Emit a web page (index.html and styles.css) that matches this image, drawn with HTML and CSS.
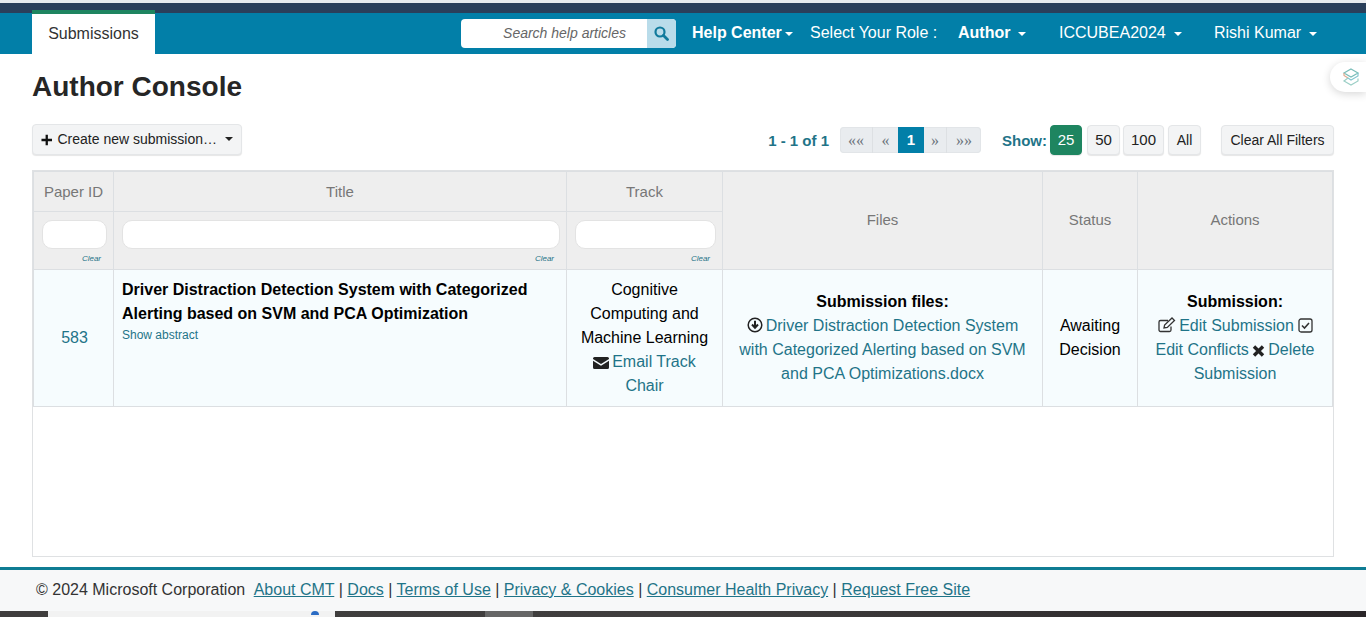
FILE: index.html
```html
<!DOCTYPE html>
<html>
  <head>
    <title>Author Console</title>
    <link rel="stylesheet" href="styles.css">
  </head>
  <body>
    <div class="topline"></div>
    <nav class="nav">
      <a class="tab" href="#">Submissions</a>
      <div class="nav-right">
        <form class="search">
          <span class="search-text">Search help articles</span>
          <span class="search-btn">
            <svg width="15" height="15" viewBox="0 0 15 15"><circle cx="6" cy="6" r="4.500" fill="none" stroke="#0f7a9c" stroke-width="2.200"/><path d="M9.500 9.500l4 4" stroke="#0f7a9c" stroke-width="2.800" stroke-linecap="round"/></svg>
          </span>
        </form>
        <span class="nav-item help"><b>Help Center</b><i class="caret small"></i></span>
        <span class="nav-item role">Select Your Role :</span>
        <span class="nav-item author"><b>Author</b><i class="caret"></i></span>
        <span class="nav-item conf">ICCUBEA2024<i class="caret"></i></span>
        <span class="nav-item user">Rishi Kumar<i class="caret"></i></span>
      </div>
    </nav>

    <div class="widget">
      <svg width="20" height="20" viewBox="0 0 20 20" fill="none" stroke-width="1.200"><path d="M10 2l7 4-7 4-7-4z" stroke="#79bdb8"/><path d="M3 6v2.500l4 2.500" stroke="#e0a98f"/><path d="M17 6v3l-7 4-3-2" stroke="#84c6cf"/><path d="M7 11l-4 3 7 4 7-4v-2.500" stroke="#9ccfc6"/></svg>
    </div>

    <main class="main">
      <h1 class="title">Author Console</h1>
      <div class="toolbar">
        <button class="btn create" type="button">
          <svg width="12" height="12" viewBox="0 0 12 12"><path d="M6 0.500v11M0.500 6h11" stroke="#111" stroke-width="2.400"/></svg>
          <span>Create new submission…</span>
          <i class="caret dark"></i>
        </button>
        <div class="tools-right">
          <span class="count">1 - 1 of 1</span>
          <ul class="pager">
            <li class="p-first">««</li>
            <li class="p-prev">«</li>
            <li class="active">1</li>
            <li class="p-next">»</li>
            <li class="p-last">»»</li>
          </ul>
          <span class="show">Show:</span>
          <button class="btn size on" type="button">25</button>
          <button class="btn size s50" type="button">50</button>
          <button class="btn size s100" type="button">100</button>
          <button class="btn size sall" type="button">All</button>
          <button class="btn clear" type="button">Clear All Filters</button>
        </div>
      </div>

      <div class="grid-box">
        <table class="grid">
          <colgroup>
            <col class="c-id"><col class="c-title"><col class="c-track"><col class="c-files"><col class="c-status"><col class="c-actions">
          </colgroup>
          <thead>
            <tr class="head-row">
              <th>Paper ID</th>
              <th>Title</th>
              <th>Track</th>
              <th class="merged" rowspan="2">Files</th>
              <th class="merged" rowspan="2">Status</th>
              <th class="merged" rowspan="2">Actions</th>
            </tr>
            <tr class="filter-row">
              <th><input class="filter" type="text"><a class="clear-link" href="#">Clear</a></th>
              <th><input class="filter" type="text"><a class="clear-link" href="#">Clear</a></th>
              <th><input class="filter" type="text"><a class="clear-link" href="#">Clear</a></th>
            </tr>
          </thead>
          <tbody>
            <tr>
              <td class="center id-cell"><a href="#">583</a></td>
              <td class="title-cell">
                <b>Driver Distraction Detection System with Categorized Alerting based on SVM and PCA Optimization</b>
                <a class="abstract" href="#">Show abstract</a>
              </td>
              <td class="center">
                Cognitive Computing and Machine Learning
                <svg class="ico" width="16" height="12" viewBox="0 0 16 12"><path d="M1.500 0h13A1.500 1.500 0 0 1 16 1.500v.6L8 7 0 2.100v-.6A1.500 1.500 0 0 1 1.500 0z" fill="#222"/><path d="M0 3.700l8 5 8-5v6.800a1.500 1.500 0 0 1-1.500 1.500h-13A1.500 1.500 0 0 1 0 10.500z" fill="#222"/></svg>
                <a href="#">Email Track Chair</a>
              </td>
              <td class="center">
                <b>Submission files:</b><br>
                <svg class="ico" width="16" height="16" viewBox="0 0 16 16" fill="none" stroke="#222"><circle cx="8" cy="8" r="6.800" stroke-width="1.500"/><path d="M8 3.800v6M5 7.500l3 3.200 3-3.200" stroke-width="2"/></svg>
                <a href="#">Driver Distraction Detection System with Categorized Alerting based on SVM and PCA Optimizations.docx</a>
              </td>
              <td class="center">Awaiting Decision</td>
              <td class="center">
                <b>Submission:</b><br>
                <svg class="ico" width="18" height="16" viewBox="0 0 18 16" fill="none" stroke="#333" stroke-width="1.300"><path d="M13 9.500v3.500a1.500 1.500 0 0 1-1.500 1.500h-9A1.500 1.500 0 0 1 1 13V5a1.500 1.500 0 0 1 1.500-1.500H10"/><path d="M6 11l.6-3L14 1l2.500 2.500-7.200 7z"/></svg>
                <a href="#">Edit Submission</a>
                <svg class="ico" width="15" height="15" viewBox="0 0 15 15" fill="none" stroke="#333"><rect x="1" y="1" width="13" height="13" rx="2" stroke-width="1.300"/><path d="M4 7.500l2.500 2.500L11 5" stroke-width="1.600"/></svg>
                <a href="#">Edit Conflicts</a>
                <svg class="ico ico-x" width="13" height="12" viewBox="0 0 13 12"><path d="M2 1.500l9 9M11 1.500l-9 9" stroke="#222" stroke-width="3.400"/></svg>
                <a href="#">Delete Submission</a>
              </td>
            </tr>
          </tbody>
        </table>
      </div>
    </main>

    <footer class="footer">
      © 2024 Microsoft Corporation
      <span class="foot-links">
        <a href="#">About CMT</a> | <a href="#">Docs</a> | <a href="#">Terms of Use</a> | <a href="#">Privacy &amp; Cookies</a> | <a href="#">Consumer Health Privacy</a> | <a href="#">Request Free Site</a>
      </span>
    </footer>

    <div class="taskbar">
      <div class="task-white"><i class="task-dot"></i></div>
      <div class="task-grey"></div>
    </div>
  </body>
</html>
```

FILE: styles.css
```css
* {
  box-sizing: border-box;
}
html, body {
  height: 617px;
  overflow: hidden;
}
body {
  margin: 0;
  background-color: #fff;
  color: #212529;
  font-family: "Liberation Sans", Arial, sans-serif;
  font-size: 16px;
}
a {
  color: #1f7488;
  text-decoration: none;
}

.topline {
  height: 13px;
  background-color: #2a3f5a;
  border-top: 3px solid #e8ebee;
}
.nav {
  height: 41px;
  background-color: #027fa8;
  display: flex;
  justify-content: space-between;
  padding-left: 32px;
  color: #fff;
}
.tab {
  width: 123px;
  height: 44px;
  margin-top: -3px;
  background-color: #fff;
  border-top: 4px solid #1e8560;
  color: #333;
  text-align: center;
  line-height: 40px;
}
.nav-right {
  display: flex;
  align-items: flex-start;
}
.search {
  width: 215px;
  height: 29px;
  margin: 6px 16px 0 0;
  display: flex;
  background-color: #fff;
  border-radius: 4px;
  overflow: hidden;
}
.search-text {
  flex: 1;
  padding-right: 21px;
  text-align: right;
  font-size: 14px;
  font-style: italic;
  line-height: 28px;
  color: #666;
}
.search-btn {
  width: 29px;
  padding-bottom: 1px;
  background-color: #b9dcea;
  display: flex;
  align-items: center;
  justify-content: center;
}
.nav-item {
  line-height: 40px;
  white-space: nowrap;
}
.help { width: 118px; }
.role { width: 148px; }
.author { width: 101px; }
.conf { width: 155px; }
.user { width: 152px; }
.caret {
  display: inline-block;
  margin-left: 8px;
  vertical-align: 2px;
  border-top: 4.500px solid #fff;
  border-left: 4.500px solid transparent;
  border-right: 4.500px solid transparent;
}
.caret.small {
  margin-left: 3px;
  border-top-width: 4px;
  border-left-width: 4px;
  border-right-width: 4px;
}
.caret.dark {
  border-top-color: #222;
}

.widget {
  position: absolute;
  top: 62px;
  right: 0;
  width: 36px;
  height: 30px;
  padding: 5px 0 0 11px;
  background-color: #fff;
  border-radius: 15px 0 0 15px;
  box-shadow: 0 2px 8px rgba(0, 0, 0, 0.16);
}

.main {
  height: 513px;
  padding: 0 32px;
}
.title {
  margin: 0;
  padding-top: 16px;
  height: 70px;
  font-size: 28px;
  line-height: 34px;
  font-weight: bold;
  color: #262626;
}
.toolbar {
  height: 46px;
  display: flex;
  justify-content: space-between;
  align-items: flex-start;
}
.btn {
  height: 30px;
  padding: 0 0 1px;
  background-color: #f3f4f5;
  border: 1px solid #e4e6e8;
  border-radius: 4px;
  box-shadow: 0 1px 1px rgba(0, 0, 0, 0.1);
  color: #222;
  font-family: inherit;
  font-size: 14px;
}
.create {
  width: 210px;
  height: 31px;
  padding: 0 8px 2px;
  display: flex;
  align-items: center;
  gap: 5px;
  white-space: nowrap;
}
.create svg {
  margin-top: 2px;
}
.create .caret {
  margin-left: 3px;
}
.tools-right {
  display: flex;
  align-items: center;
  height: 31px;
  padding-top: 1px;
}
.count, .show {
  color: #1f7488;
  font-size: 15px;
  font-weight: bold;
}
.count {
  margin-right: 11px;
}
.pager {
  display: flex;
  height: 26px;
  margin: 0 21px 0 0;
  padding: 0;
  list-style: none;
  background-color: #e9ecef;
  border-radius: 4px;
  overflow: hidden;
  box-shadow: 0 0 0 1px #e2e5e8 inset;
  font-family: "Liberation Serif", serif;
  font-size: 16px;
  line-height: 27px;
  color: #6c757d;
}
.pager li {
  height: 26px;
  text-align: center;
}
.p-first {
  width: 33px;
  border-right: 1px solid #dde0e3;
}
.p-prev { width: 25px; }
.p-next {
  width: 23px;
  border-right: 1px solid #dde0e3;
}
.p-last { width: 34px; }
.pager .active {
  width: 26px;
  background-color: #027fa8;
  color: #fff;
  font-family: "Liberation Sans", sans-serif;
  font-size: 15px;
  font-weight: bold;
  line-height: 26px;
}
.show {
  margin-right: 3px;
}
.size {
  font-size: 15px;
}
.size.on {
  width: 32px;
  background-color: #1e8560;
  border-color: #1e8560;
  color: #fff;
  margin-right: 5px;
}
.s50 {
  width: 33px;
  margin-right: 3px;
}
.s100 {
  width: 41px;
  margin-right: 4px;
}
.sall {
  width: 33px;
  font-size: 14px;
}
.clear {
  margin-left: 20px;
  width: 113px;
  white-space: nowrap;
}

.grid-box {
  height: 387px;
  border: 1px solid #dfe1e3;
}
.grid {
  width: 1299px;
  table-layout: fixed;
  border-collapse: collapse;
  line-height: 24px;
}
.c-id { width: 80px; }
.c-title { width: 453px; }
.c-track { width: 156px; }
.c-files { width: 320px; }
.c-status { width: 95px; }
.c-actions { width: 195px; }
.grid th, .grid td {
  border: 1px solid #dcdfe2;
}
.grid th {
  background-color: #eee;
  color: #777;
  font-size: 15px;
  font-weight: normal;
  text-align: center;
  vertical-align: middle;
}
.head-row {
  height: 40px;
}
.head-row th {
  padding-top: 1px;
}
.head-row .merged {
  padding: 0 0 1px;
}
.filter-row {
  height: 58px;
}
.filter-row th {
  padding: 8px 6px 0 8px;
  vertical-align: top;
  text-align: right;
  line-height: 12px;
}
.filter {
  display: block;
  width: 100%;
  height: 29px;
  border: 1px solid #e3e3e3;
  border-radius: 10px;
  background-color: #fff;
}
.clear-link {
  display: block;
  margin: 5px 6px 0 0;
  font-size: 8px;
  font-style: italic;
  line-height: 9px;
}
.grid tbody tr {
  height: 137px;
}
.grid td {
  background-color: #f6fcfe;
  color: #000;
  padding: 7px 9px;
}
.center {
  text-align: center;
  vertical-align: middle;
}
.grid .id-cell {
  padding-left: 11px;
}
.grid .title-cell {
  padding: 8px 8px 7px;
  vertical-align: top;
}
.abstract {
  display: block;
  font-size: 12px;
  line-height: 18px;
}
.ico {
  margin-right: -1.500px;
  vertical-align: -2px;
}
.ico-x {
  margin-left: -1px;
}

.footer {
  height: 44px;
  padding: 9px 36px 0;
  background-color: #f7f8f9;
  border-top: 3px solid #0f7c93;
  color: #333;
  line-height: 22px;
}
.foot-links {
  margin-left: 4px;
}
.foot-links a {
  text-decoration: underline;
}
.taskbar {
  height: 6px;
  background: linear-gradient(90deg, #3f3d3d, #403e3e 50%, #2a2628);
  display: flex;
  padding-left: 48px;
}
.task-white {
  width: 287px;
  padding-left: 263px;
  background-color: #f2f2f2;
}
.task-dot {
  display: block;
  width: 8px;
  height: 4px;
  background-color: #2b6cc4;
  border-radius: 4px 4px 0 0;
}
.task-grey {
  width: 48px;
  margin-left: 150px;
  background-color: #666;
}
```
